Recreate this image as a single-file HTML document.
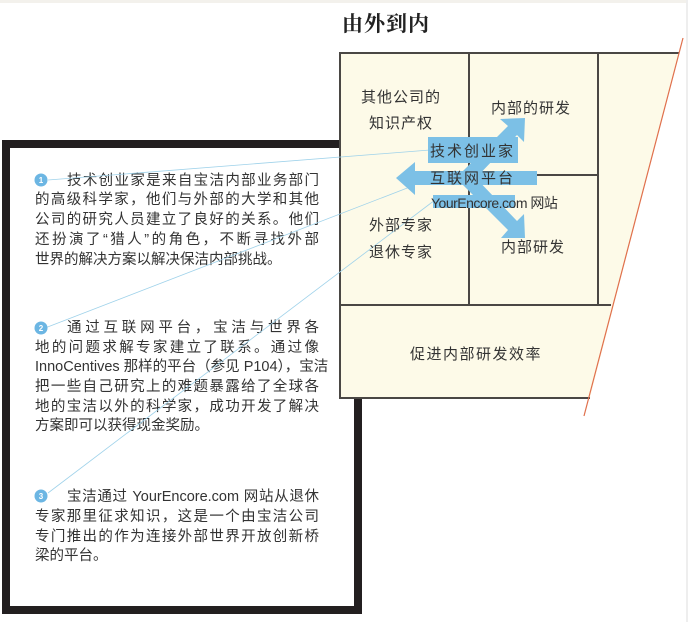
<!DOCTYPE html>
<html><head><meta charset="utf-8"><style>
html,body{margin:0;padding:0;background:#fff;}
body{width:688px;height:622px;position:relative;overflow:hidden;font-family:"Liberation Sans","Noto Sans CJK SC",sans-serif;color:#333;}
.frame{position:absolute;left:2px;top:140px;width:344px;height:458px;border:8px solid #231f20;background:#fff;}
.ln{position:absolute;left:35px;width:284px;font-size:14.5px;height:20px;line-height:20px;text-align:justify;text-align-last:justify;white-space:nowrap;letter-spacing:0;color:#333;}
.c{position:absolute;width:13px;height:13px;border-radius:50%;background:#6cb6e3;color:#fff;font-size:8px;line-height:13px;text-align:center;}
.t{position:absolute;font-size:15px;color:#333;white-space:nowrap;}
svg{position:absolute;left:0;top:0;}
</style></head><body>
<div style="position:absolute;left:0;top:0;width:688px;height:3px;background:#f3f1ec"></div>
<div style="position:absolute;left:342px;top:8px;font-family:'Noto Serif CJK SC',serif;font-weight:bold;font-size:21px;color:#222;letter-spacing:1px">由外到内</div>
<div class="frame"></div>
<div class="ln" style="top:171px;left:67px;width:252px">技术创业家是来自宝洁内部业务部门</div>
<div class="ln" style="top:190px">的高级科学家，他们与外部的大学和其他</div>
<div class="ln" style="top:210px">公司的研究人员建立了良好的关系。他们</div>
<div class="ln" style="top:230px">还扮演了“猎人”的角色，不断寻找外部</div>
<div class="ln" style="top:250px;text-align-last:left">世界的解决方案以解决保洁内部挑战。</div>
<div class="ln" style="top:318px;left:67px;width:252px">通过互联网平台，宝洁与世界各</div>
<div class="ln" style="top:338px">地的问题求解专家建立了联系。通过像</div>
<div class="ln" style="top:357px">InnoCentives 那样的平台（参见 P104），宝洁</div>
<div class="ln" style="top:377px">把一些自己研究上的难题暴露给了全球各</div>
<div class="ln" style="top:397px">地的宝洁以外的科学家，成功开发了解决</div>
<div class="ln" style="top:416px;text-align-last:left">方案即可以获得现金奖励。</div>
<div class="ln" style="top:487px;left:67px;width:252px">宝洁通过 YourEncore.com 网站从退休</div>
<div class="ln" style="top:507px">专家那里征求知识，这是一个由宝洁公司</div>
<div class="ln" style="top:527px">专门推出的作为连接外部世界开放创新桥</div>
<div class="ln" style="top:546px;text-align-last:left">梁的平台。</div>
<svg width="688" height="622">
<polygon points="340,53 679,53 590,398 340,398" fill="#fdfae8"/>
<g stroke="#4a4744" stroke-width="2" fill="none">
<polyline points="679,53 340,53 340,398 590,398"/>
<line x1="469" y1="53" x2="469" y2="305"/>
<line x1="598" y1="53" x2="598" y2="305"/>
<line x1="469" y1="175" x2="598" y2="175"/>
<line x1="340" y1="305" x2="611" y2="305"/>
</g>
<line x1="683" y1="38" x2="584" y2="416" stroke="#e0704c" stroke-width="1.2"/>
<g stroke="#9fd2ea" stroke-width="0.8">
<line x1="48" y1="180" x2="430" y2="150"/>
<line x1="45" y1="328" x2="415" y2="185"/>
<line x1="48" y1="493" x2="435" y2="200"/>
</g>
<g fill="#7cc0e6">
<rect x="428" y="137" width="90" height="26"/>
<rect x="433" y="195" width="82" height="13"/>
<polygon points="396,178 415,162 415,171 537,171 537,185 415,185 415,195"/>
<polygon points="462,172 508,126 500,119 525,118 524,142 517,135 472,182"/>
<polygon points="462,184 472,174 517,221 524,214 525,238 501,238 508,230"/>
</g>
<g fill="#6cb6e3"><circle cx="41" cy="180" r="6.5"/><circle cx="41" cy="328" r="6.5"/><circle cx="41" cy="496" r="6.5"/></g>
<g fill="#fff" font-size="8" font-family="Liberation Sans" text-anchor="middle" font-weight="bold"><text x="41" y="183">1</text><text x="41" y="331">2</text><text x="41" y="499">3</text></g>
</svg>
<div class="t" style="left:361px;top:86px;letter-spacing:1px">其他公司的</div>
<div class="t" style="left:369px;top:112px;letter-spacing:1px">知识产权</div>
<div class="t" style="left:491px;top:97px;letter-spacing:1px">内部的研发</div>
<div class="t" style="left:430px;top:140px;letter-spacing:2px">技术创业家</div>
<div class="t" style="left:430px;top:167px;letter-spacing:2px">互联网平台</div>
<div class="t" style="left:431px;top:193px;font-size:14px;letter-spacing:-0.5px">YourEncore.com 网站</div>
<div class="t" style="left:369px;top:214px;letter-spacing:1px">外部专家</div>
<div class="t" style="left:369px;top:241px;letter-spacing:1px">退休专家</div>
<div class="t" style="left:501px;top:236px;letter-spacing:1px">内部研发</div>
<div class="t" style="left:410px;top:343px;letter-spacing:1.5px">促进内部研发效率</div>
<div style="position:absolute;left:686px;top:0;width:2px;height:622px;background:#eeeeee"></div>
</body></html>
